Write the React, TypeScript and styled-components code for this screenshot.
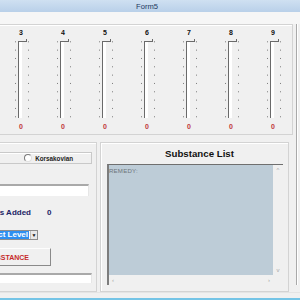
import React from 'react';
import styled, { createGlobalStyle } from 'styled-components';

const levels = [3, 4, 5, 6, 7, 8, 9];
const tickYs = Array.from({ length: 10 }, (_, i) => 4.3 + i * 8.33);

const GlobalStyle = createGlobalStyle`
  html, body {
    margin: 0;
    padding: 0;
    background: #f0f0f0;
    overflow: hidden;
  }
  body {
    font-family: "Liberation Sans", Arial, sans-serif;
  }
`;

const Window = styled.div`
  width: 300px;
  height: 300px;
  display: flex;
  flex-direction: column;
  background: #f0f0f0;
  overflow: hidden;
`;

const TitleBar = styled.div`
  height: 12px;
  background: linear-gradient(#cfe0f1, #b9d0e9);
  color: #1d3a5e;
  font-size: 7.6px;
  line-height: 13px;
  text-align: center;
  padding-right: 6px;
`;

const MenuStrip = styled.div`
  height: 13px;
  background: #f6f6f6;
`;

const Body = styled.div`
  flex: 1;
  display: flex;
`;

const MainColumn = styled.div`
  width: 295px;
  display: flex;
  flex-direction: column;
`;

const GroupBox = styled.div`
  border: 1px solid #d3d3d3;
  box-shadow: inset 1px 1px 0 #ffffff;
  box-sizing: border-box;
`;

const SliderGroup = styled(GroupBox)`
  margin-left: -2px;
  width: 295px;
  height: 111px;
  padding: 4px 0 0 1px;
  display: grid;
  grid-template-columns: repeat(7, 42px);
`;

const SliderColumn = styled.div`
  display: flex;
  flex-direction: column;
  align-items: center;
`;

const LevelLabel = styled.div`
  font-size: 7px;
  font-weight: bold;
  line-height: 8px;
  height: 8px;
  color: #111;
`;

const ValueLabel = styled.div`
  margin-top: 2px;
  font-size: 7px;
  font-weight: bold;
  line-height: 8px;
  color: #c0353a;
`;

const LowerRow = styled.div`
  margin-top: 7px;
  height: 150px;
  display: flex;
`;

const LeftGroup = styled(GroupBox)`
  margin-left: -2px;
  width: 99px;
  display: flex;
  flex-direction: column;
`;

const OptionFrame = styled.div`
  margin: 9px 0 0 -50px;
  width: 143px;
  height: 12px;
  box-sizing: border-box;
  border: 1px solid #c9c9c9;
  box-shadow: inset 1px 1px 0 #ffffff;
  display: flex;
  align-items: center;
  justify-content: flex-end;
  padding-right: 18px;
  gap: 3px;
`;

const Radio = styled.span`
  width: 6px;
  height: 6px;
  border-radius: 50%;
  border: 1px solid;
  border-color: #7a7a7a #e0e0e0 #e0e0e0 #7a7a7a;
  background: #fff;
`;

const OptionText = styled.span`
  font-size: 6.3px;
  font-weight: bold;
  color: #222;
`;

const TextInput = styled.div<{ $top: number; $height: number; $right: number }>`
  margin: ${(p) => p.$top}px 0 0 -50px;
  width: ${(p) => p.$right + 50}px;
  height: ${(p) => p.$height}px;
  box-sizing: border-box;
  background: #fff;
  border-top: 2px solid #a9a9a9;
  border-right: 1px solid #e6e6e6;
`;

const CountRow = styled.div`
  margin: 12px 0 0 -50px;
  display: flex;
  align-items: center;
  height: 9px;
`;

const CountLabel = styled.span`
  width: 82px;
  text-align: right;
  font-size: 8px;
  font-weight: bold;
  color: #1d2466;
  white-space: nowrap;
`;

const CountValue = styled.span`
  margin-left: 16px;
  font-size: 8px;
  font-weight: bold;
  color: #1d2466;
`;

const Combo = styled.div`
  margin: 13px 0 0 -50px;
  width: 89px;
  height: 10px;
  box-sizing: border-box;
  border: 1px solid #8c8c8c;
  background: #fff;
  display: flex;
`;

const ComboSelected = styled.div`
  flex: 1;
  background: #2e8ff0;
  color: #fff;
  font-size: 8px;
  font-weight: bold;
  line-height: 8px;
  text-align: right;
  padding-right: 1px;
  white-space: nowrap;
`;

const ComboArrow = styled.div`
  width: 6px;
  margin-left: 1px;
  background: #e8e8e8;
  border-left: 1px solid #bdbdbd;
  font-size: 5px;
  line-height: 8px;
  text-align: center;
  color: #111;
`;

const ActionButton = styled.button`
  margin: 8px 0 0 -49px;
  width: 101px;
  height: 18px;
  padding: 0 21px 0 0;
  text-align: right;
  background: #f0f0f0;
  border: 1px solid;
  border-color: #fdfdfd #8a8a8a #8a8a8a #fdfdfd;
  font-family: "Liberation Sans", Arial, sans-serif;
  font-size: 7px;
  font-weight: bold;
  color: #c62a2a;
  white-space: nowrap;
`;

const SubstanceGroup = styled(GroupBox)`
  margin-left: 3px;
  width: 189px;
  display: flex;
  flex-direction: column;
`;

const GroupTitle = styled.div`
  margin-top: 5px;
  padding-left: 10px;
  height: 12px;
  font-size: 9.7px;
  font-weight: bold;
  line-height: 12px;
  text-align: center;
  color: #111;
`;

const ListBox = styled.div`
  margin: 4px 0 0 6px;
  width: 176px;
  height: 121px;
  box-sizing: border-box;
  border-top: 1px solid #6f6f6f;
  border-left: 2px solid #7d7d7d;
  display: grid;
  grid-template-columns: 1fr 10px;
  grid-template-rows: 1fr 10px;
  background: #f0f0f0;
`;

const ListArea = styled.div`
  background: #bdccd7;
  font-size: 6.1px;
  color: #6d747a;
  padding: 2px 0 0 0;
  letter-spacing: 0.2px;
`;

const ScrollBar = styled.div<{ $vertical?: boolean }>`
  display: flex;
  flex-direction: ${(p) => (p.$vertical ? 'column' : 'row')};
  justify-content: space-between;
  align-items: center;
  padding: ${(p) => (p.$vertical ? '2px 0' : '0 3px')};
  color: #a6a6a6;
  font-size: 6px;
  line-height: 6px;
`;

const RightSliver = styled.div`
  flex: 1;
  margin-left: 1px;
  border-left: 1px solid #a9a9a9;
  box-shadow: inset 1px 0 0 #ffffff;
  margin-bottom: 7px;
`;

const BottomEdge = styled.div`
  height: 5px;
  border-top: 1px solid #e4e4e4;
  border-bottom: 2px solid #74c4e6;
`;

const Trackbar = () => (
  <svg width="20" height="84" viewBox="0 0 20 84">
    {tickYs.map((y) => (
      <g key={y} fill="#7c7c7c">
        <rect x="4" y={y} width="1" height="1" />
        <rect x="17" y={y} width="1" height="1" />
      </g>
    ))}
    <rect x="8" y="5" width="3" height="76" fill="#ffffff" />
    <rect x="7" y="4" width="1" height="77" fill="#6a6a6a" />
    <rect x="7" y="4" width="9" height="1" fill="#6a6a6a" />
    <rect x="15" y="2" width="1" height="3" fill="#6a6a6a" />
  </svg>
);

const App = () => {
  return (
    <Window>
      <GlobalStyle />
      <TitleBar>Form5</TitleBar>
      <MenuStrip />
      <Body>
        <MainColumn>
          <SliderGroup>
            {levels.map((level) => (
              <SliderColumn key={level}>
                <LevelLabel>{level}</LevelLabel>
                <Trackbar />
                <ValueLabel>0</ValueLabel>
              </SliderColumn>
            ))}
          </SliderGroup>

          <LowerRow>
            <LeftGroup>
              <OptionFrame>
                <Radio />
                <OptionText>Korsakovian</OptionText>
              </OptionFrame>
              <TextInput $top={20} $height={12} $right={90} />
              <CountRow>
                <CountLabel>Substances Added</CountLabel>
                <CountValue>0</CountValue>
              </CountRow>
              <Combo>
                <ComboSelected>Select Level</ComboSelected>
                <ComboArrow>▼</ComboArrow>
              </Combo>
              <ActionButton>ADD SUBSTANCE</ActionButton>
              <TextInput $top={7} $height={10} $right={93} />
            </LeftGroup>

            <SubstanceGroup>
              <GroupTitle>Substance List</GroupTitle>
              <ListBox>
                <ListArea>REMEDY:</ListArea>
                <ScrollBar $vertical>
                  <span>^</span>
                  <span>v</span>
                </ScrollBar>
                <ScrollBar>
                  <span>‹</span>
                  <span>›</span>
                </ScrollBar>
                <div />
              </ListBox>
            </SubstanceGroup>
          </LowerRow>
        </MainColumn>
        <RightSliver />
      </Body>
      <BottomEdge />
    </Window>
  );
};

export default App;
